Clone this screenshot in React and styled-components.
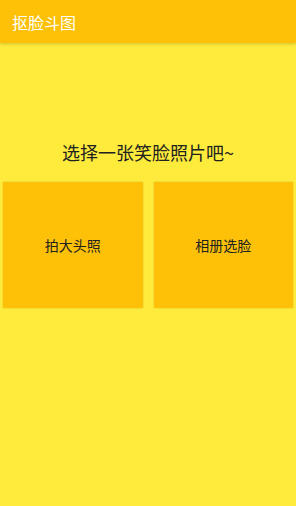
import styled, { createGlobalStyle } from "styled-components";

const GlobalStyle = createGlobalStyle`
  html, body {
    margin: 0;
    padding: 0;
    background: #ffeb3b;
  }
  body {
    font-family: "Noto Sans CJK SC", "Noto Sans", sans-serif;
  }
`;

const Page = styled.div`
  min-height: 506px;
  background: #ffeb3b;
  display: flex;
  flex-direction: column;
`;

const Toolbar = styled.header`
  height: 43px;
  background: #ffc107;
  display: flex;
  align-items: center;
  padding: 0 12px;
  box-shadow: 0 1px 3px rgba(0, 0, 0, 0.18);
  position: relative;
  z-index: 1;
`;

const Title = styled.h1`
  margin: 0;
  font-size: 16px;
  font-weight: 400;
  color: #ffffff;
  line-height: 20px;
`;

const Prompt = styled.p`
  margin: 97px 0 0;
  text-align: center;
  font-size: 18px;
  line-height: 24px;
  color: #212121;
`;

const Choices = styled.div`
  display: flex;
  gap: 11px;
  padding: 0 3px;
  margin-top: 18px;
`;

const Choice = styled.button`
  flex: 1;
  height: 126px;
  border: none;
  border-radius: 0;
  background: #ffc107;
  box-shadow: 0 0 2px rgba(0, 0, 0, 0.15);
  font-family: inherit;
  font-size: 14px;
  color: #212121;
  display: flex;
  align-items: center;
  justify-content: center;
  padding: 0;
  cursor: pointer;
`;

export default function App() {
  return (
    <>
      <GlobalStyle />
      <Page>
        <Toolbar>
          <Title>抠脸斗图</Title>
        </Toolbar>
        <Prompt>选择一张笑脸照片吧~</Prompt>
        <Choices>
          <Choice>拍大头照</Choice>
          <Choice>相册选脸</Choice>
        </Choices>
      </Page>
    </>
  );
}
